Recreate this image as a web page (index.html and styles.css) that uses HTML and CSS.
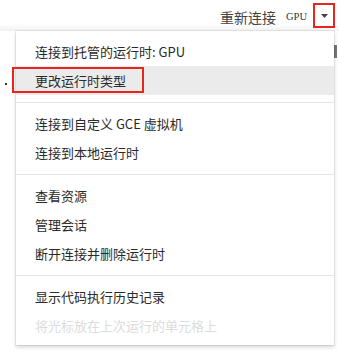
FILE: index.html
```html
<!DOCTYPE html>
<html lang="zh-CN">
<head>
<meta charset="utf-8">
<link rel="stylesheet" href="styles.css">
</head>
<body>
<div class="page">
  <div class="topbar">
    <span class="reconnect">重新连接</span>
    <span class="gpu">GPU</span>
    <span class="caret-btn">
      <svg class="caret" width="7" height="4" viewBox="0 0 7 4"><path d="M0 0h7L3.5 4z" fill="#444"/></svg>
      <span class="annot annot-caret"></span>
    </span>
  </div>
  <div class="stage">
    <span class="dot"></span>
    <span class="scroll-bit"></span>
    <div class="menu">
      <div class="item">连接到托管的运行时: GPU</div>
      <div class="item active">更改运行时类型<span class="annot annot-item"></span></div>
      <div class="sep"></div>
      <div class="item">连接到自定义 GCE 虚拟机</div>
      <div class="item">连接到本地运行时</div>
      <div class="sep"></div>
      <div class="item">查看资源</div>
      <div class="item">管理会话</div>
      <div class="item">断开连接并删除运行时</div>
      <div class="sep"></div>
      <div class="item">显示代码执行历史记录</div>
      <div class="item disabled">将光标放在上次运行的单元格上</div>
    </div>
  </div>
</div>
</body>
</html>
```
FILE: styles.css
```css
html, body {
  margin: 0;
  padding: 0;
  background: #fff;
}
body {
  font-family: "Noto Sans CJK SC", "Noto Sans", sans-serif;
  color: #333;
  width: 339px;
  height: 354px;
  overflow: hidden;
}
.topbar {
  height: 31px;
  display: flex;
  align-items: center;
  justify-content: flex-end;
  padding-right: 4px;
  background: linear-gradient(#fff 0, #fff 24px, #f1f1f1 31px);
}
.reconnect {
  font-size: 14px;
  color: #444;
  line-height: 20px;
  margin-top: 2px;
}
.gpu {
  font-family: "Liberation Serif", "DejaVu Serif", serif;
  font-size: 10.5px;
  color: #333;
  margin-left: 10px;
  margin-top: 2px;
}
.caret-btn {
  position: relative;
  width: 22px;
  height: 25px;
  margin-left: 6px;
  display: flex;
  align-items: center;
  justify-content: center;
  margin-top: -1px;
}
.caret {
  display: block;
  margin-top: 2px;
}
.annot {
  position: absolute;
  border: 2px solid #e8241d;
  box-sizing: border-box;
  pointer-events: none;
}
.annot-caret {
  left: 0;
  top: 0;
  right: 0;
  bottom: 0;
}
.stage {
  position: relative;
  padding-left: 16px;
}
.dot {
  position: absolute;
  left: 5px;
  top: 52px;
  width: 2px;
  height: 2px;
  background: #333;
}
.scroll-bit {
  position: absolute;
  right: 2px;
  top: 14px;
  width: 3px;
  height: 13px;
  background: #777;
}
.menu {
  position: relative;
  width: 318px;
  background: #fff;
  padding: 6px 0 5px;
  box-shadow: 0 0 0 1px rgba(0,0,0,0.06), 0 2px 4px rgba(0,0,0,0.18);
}
.item {
  position: relative;
  height: 29px;
  line-height: 29px;
  padding-left: 19px;
  font-size: 13px;
  color: #2a2a2a;
  white-space: nowrap;
}
.item.active {
  background: #ebebeb;
}
.item.disabled {
  color: #dcdcdc;
}
.annot-item {
  left: -4px;
  top: 1px;
  width: 132px;
  height: 26px;
}
.sep {
  height: 1px;
  background: #e6e6e6;
  margin: 7px 0 6px;
}
```
